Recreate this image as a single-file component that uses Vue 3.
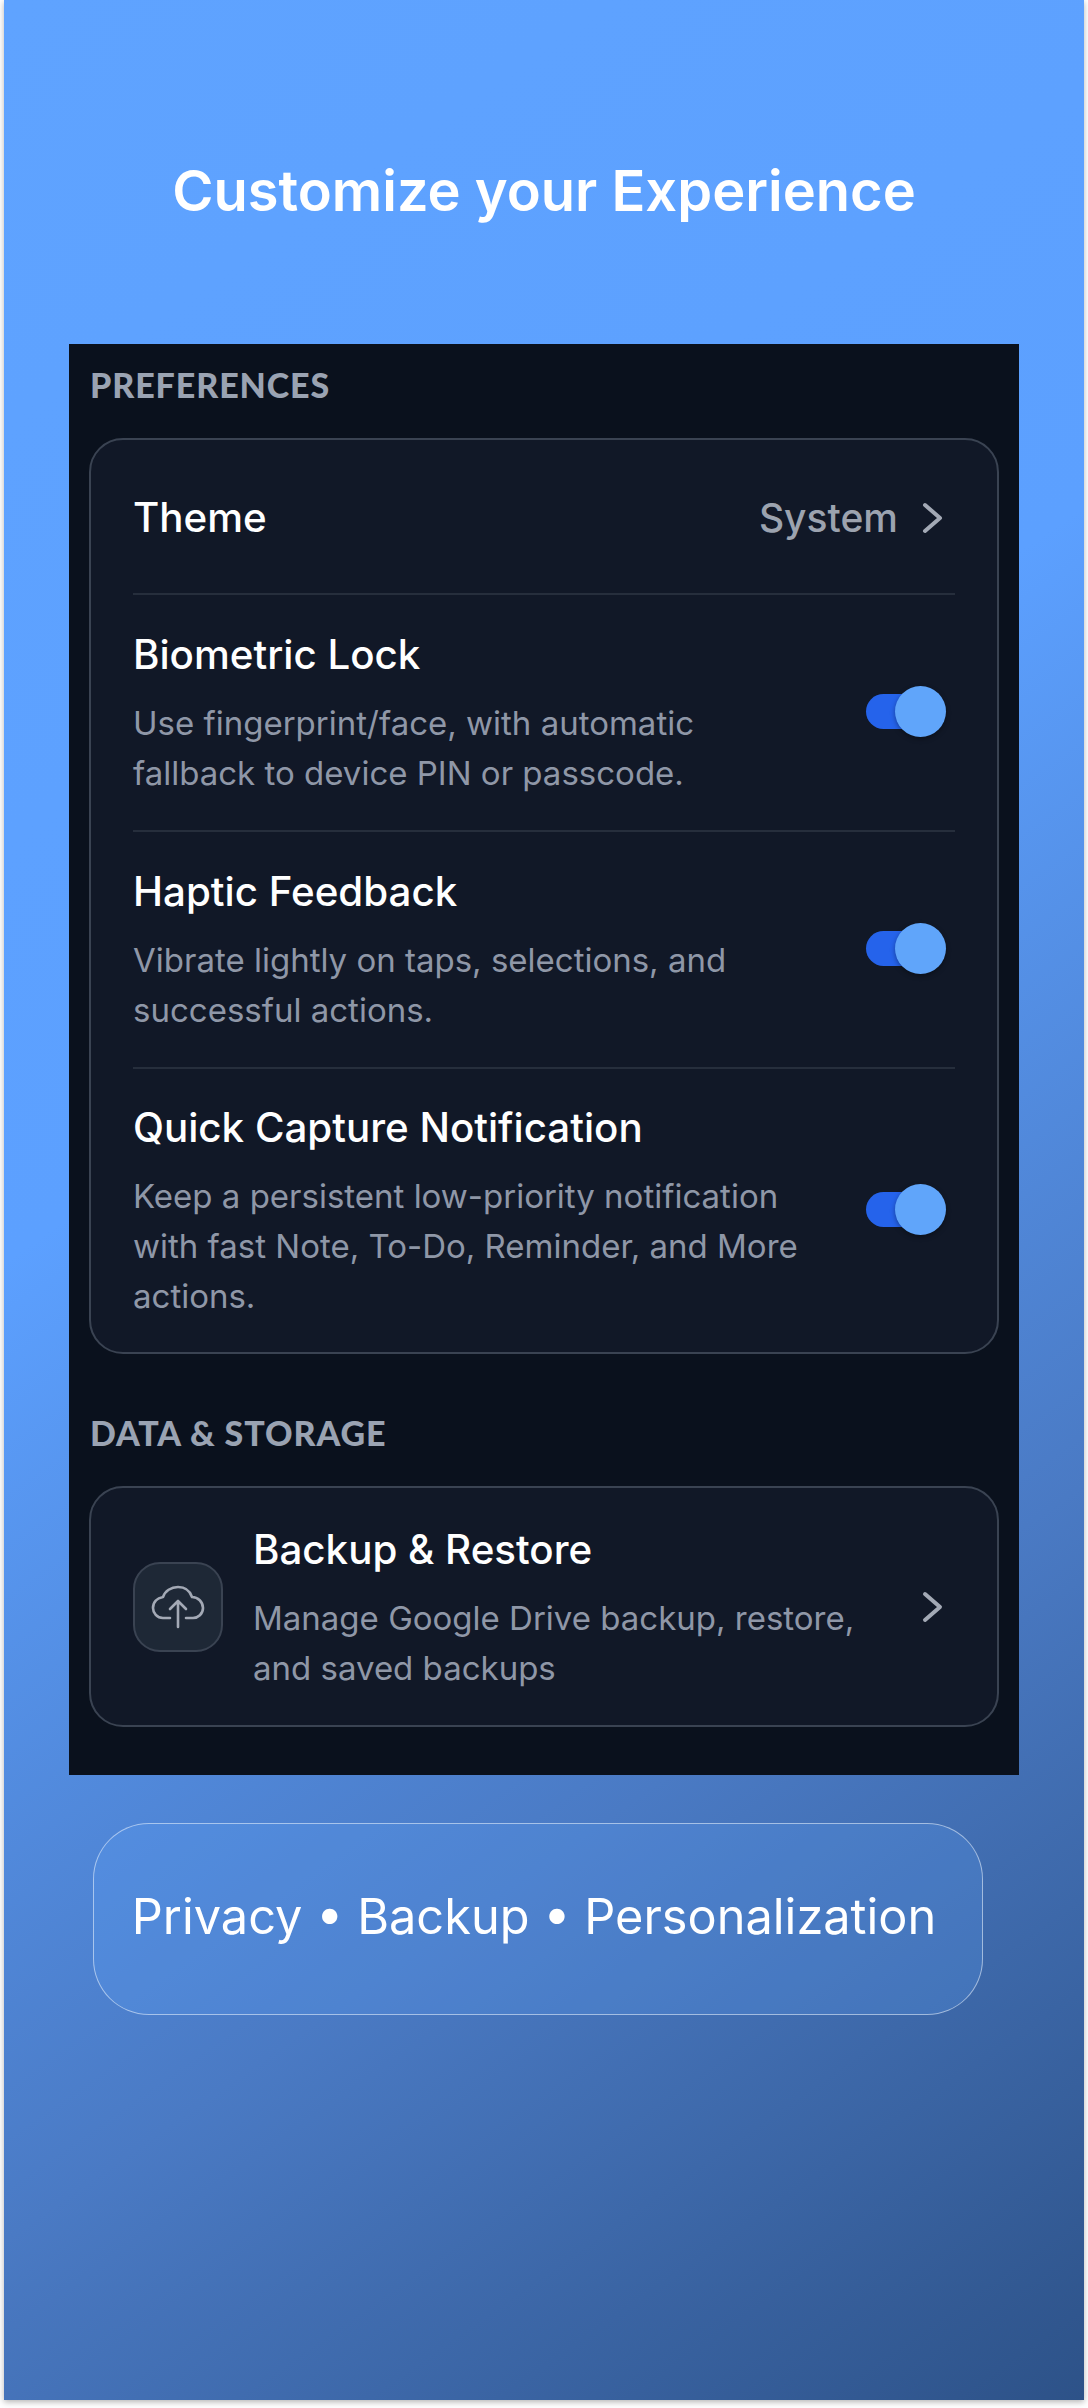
<script setup>
const settings = [
  { title: 'Biometric Lock', desc: 'Use fingerprint/face, with automatic fallback to device PIN or passcode.' },
  { title: 'Haptic Feedback', desc: 'Vibrate lightly on taps, selections, and successful actions.' },
  { title: 'Quick Capture Notification', desc: 'Keep a persistent low-priority notification with fast Note, To-Do, Reminder, and More actions.' },
]
</script>

<template>
  <div class="page">
    <main class="frame">
      <h1 class="headline">Customize your Experience</h1>

      <section class="screen">
        <h2 class="section-label">PREFERENCES</h2>
        <div class="card">
          <div class="row row--theme">
            <span class="row__title">Theme</span>
            <span class="row__value">System</span>
            <svg class="chevron" viewBox="0 0 24 36" aria-hidden="true">
              <path d="M5 5l15 13L5 31" />
            </svg>
          </div>
          <div v-for="item in settings" :key="item.title" class="row">
            <div class="row__body">
              <div class="row__title">{{ item.title }}</div>
              <p class="row__desc">{{ item.desc }}</p>
            </div>
            <span class="toggle" aria-hidden="true"><span class="toggle__thumb"></span></span>
          </div>
        </div>

        <h2 class="section-label section-label--data">DATA &amp; STORAGE</h2>
        <div class="card card--backup">
          <div class="tile">
            <svg class="cloud" viewBox="20 20 60 60" aria-hidden="true">
              <path d="M42 61H35C29 61 25 56 25 51C25 45 29 41 35 40C37 34 43 30 50 30C57 30 62 34 64 40C70 40 75 45 75 51C75 57 70 61 65 61H58" />
              <path d="M50 70V44M42 52l8-8 8 8" />
            </svg>
          </div>
          <div class="row__body">
            <div class="row__title">Backup &amp; Restore</div>
            <p class="row__desc">Manage Google Drive backup, restore, and saved backups</p>
          </div>
          <svg class="chevron" viewBox="0 0 24 36" aria-hidden="true">
            <path d="M5 5l15 13L5 31" />
          </svg>
        </div>
      </section>

      <div class="pill">Privacy • Backup • Personalization</div>
    </main>
  </div>
</template>

<style scoped>
.page {
  width: 1088px;
  height: 2408px;
  background: #fff;
  padding: 0 4px;
  box-sizing: border-box;
  overflow: hidden;
}

.frame {
  height: 2400px;
  padding: 0 65px;
  box-sizing: border-box;
  background: linear-gradient(145deg, #5fa3ff 0%, #5ca0ff 40%, #4a7ac4 71%, #2d5288 100%);
  box-shadow: 0 2px 6px rgba(0, 0, 0, 0.3);
  display: flex;
  flex-direction: column;
  align-items: flex-start;
}

.headline {
  align-self: center;
  margin: 0;
  height: 344px;
  box-sizing: border-box;
  padding-top: 156px;
  font-family: Inter, sans-serif;
  font-size: 56px;
  line-height: 70px;
  font-weight: 600;
  color: #fff;
  white-space: nowrap;
}

.screen {
  width: 950px;
  height: 1431px;
  box-sizing: border-box;
  padding: 0 20px;
  background: #0a111d;
  font-family: Inter, sans-serif;
}

.section-label {
  margin: 0;
  height: 94px;
  box-sizing: border-box;
  padding-top: 21px;
  padding-left: 1px;
  font-family: Lato, sans-serif;
  font-size: 34px;
  line-height: 40px;
  font-weight: 900;
  letter-spacing: 0.9px;
  color: #9aa3b2;
}

.section-label--data {
  height: 132px;
  padding-top: 59px;
}

.card {
  border: 2px solid #3a4352;
  border-radius: 34px;
  background: #111827;
  padding: 0 42px;
}

.row {
  display: flex;
  align-items: center;
  height: 237px;
  box-sizing: border-box;
  padding-top: 2px;
  border-top: 2px solid #262e3c;
}

.row--theme {
  height: 153px;
  border-top: 0;
}

.row:last-child {
  height: 285px;
}

.row__body {
  flex: 1;
  min-width: 0;
}

.row__title {
  font-size: 40.3px;
  line-height: 50px;
  font-weight: 500;
  color: #fff;
}

.row--theme .row__title {
  flex: 1;
}

.row__value {
  font-size: 39px;
  font-weight: 500;
  color: #9ca3af;
  margin-right: 22px;
}

.row__desc {
  margin: 18px 0 0;
  max-width: 680px;
  font-size: 33px;
  line-height: 50px;
  color: #8f97a7;
}

.chevron {
  width: 24px;
  height: 36px;
  margin-right: 11px;
  flex: none;
  fill: none;
  stroke: #a3a9b5;
  stroke-width: 4;
  stroke-linecap: round;
  stroke-linejoin: round;
}

.toggle {
  position: relative;
  flex: none;
  width: 62px;
  height: 35px;
  margin-right: 27px;
  margin-bottom: 4px;
  border-radius: 18px;
  background: #2563eb;
}

.toggle__thumb {
  position: absolute;
  right: -18px;
  top: -8px;
  width: 51px;
  height: 51px;
  border-radius: 50%;
  background: #60a5fa;
  box-shadow: 0 2px 5px rgba(0, 0, 0, 0.35);
}

.card--backup {
  display: flex;
  align-items: center;
  height: 241px;
  box-sizing: border-box;
}

.card--backup .row__title {
  margin-top: 5px;
}

.card--backup .row__desc {
  max-width: 640px;
}

.tile {
  width: 90px;
  height: 90px;
  flex: none;
  box-sizing: border-box;
  margin-right: 30px;
  border: 2px solid #3a4352;
  border-radius: 27px;
  background: #1e2836;
  display: flex;
  align-items: center;
  justify-content: center;
}

.cloud {
  width: 60px;
  height: 60px;
  flex: none;
  fill: none;
  stroke: #a3a9b5;
  stroke-width: 2.6;
  stroke-linecap: round;
  stroke-linejoin: round;
}

.pill {
  width: 890px;
  height: 192px;
  margin-top: 48px;
  margin-left: 24px;
  padding: 0 8px 6px 0;
  box-sizing: border-box;
  border: 1.5px solid rgba(255, 255, 255, 0.5);
  border-radius: 56px;
  background: rgba(96, 165, 250, 0.22);
  display: flex;
  align-items: center;
  justify-content: center;
  font-family: Inter, sans-serif;
  font-size: 48.7px;
  color: #fff;
  white-space: nowrap;
}
</style>
